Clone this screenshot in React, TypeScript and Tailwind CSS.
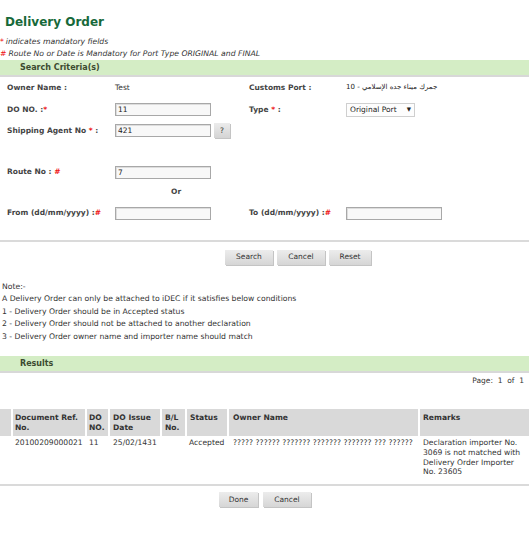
const FONT = "font-['DejaVu_Sans',Verdana,sans-serif]";

function Star({ c = "*" }: { c?: string }) {
  return <span className="text-[#e11]">{c}</span>;
}

function Field({ value = "", w = "w-[96px]" }: { value?: string; w?: string }) {
  return (
    <div
      className={`${w} h-[13px] border border-[#a8a8a8] bg-[#f8f8f8] px-[2px] text-[7.5px] leading-[11px] text-[#222] shadow-[inset_1px_1px_0_#ddd]`}
    >
      {value}
    </div>
  );
}

function Btn({ label, w }: { label: string; w: string }) {
  return (
    <div
      className={`${w} h-[15px] flex items-center justify-center bg-gradient-to-b from-[#ececec] to-[#d6d6d6] text-[7.5px] text-[#333] shadow-[1px_1px_0_#c4c4c4]`}
    >
      {label}
    </div>
  );
}

function Bar({ title }: { title: string }) {
  return (
    <div className="border-b-2 border-[#d8d8d8]">
      <div className="h-[15px] bg-[#d4edc5] pl-[20px] flex items-center text-[8px] font-bold text-[#3c4a30]">
        {title}
      </div>
    </div>
  );
}

const label = "text-[7.5px] font-bold text-[#444]";
const th = "bg-[#d9d9d9] h-[27px] pt-[4px] font-bold text-[#333]";
const td = "pt-[2px] text-[#333]";

export default function App() {
  return (
    <div className={`${FONT} w-[529px] h-[534px] bg-white text-[#333] overflow-hidden`}>
      {/* heading */}
      <div className="h-[36px] pt-[15px] pl-[5px] text-[12px] leading-[14px] font-bold text-[#17693a]">
        Delivery Order
      </div>
      <div className="h-[12px] flex items-center text-[7.7px] italic text-[#333]">
        <Star />
        <span className="ml-[2px]">indicates mandatory fields</span>
      </div>
      <div className="h-[12px] flex items-center text-[7.7px] italic text-[#333]">
        <Star c="#" />
        <span className="ml-[2px]">Route No or Date is Mandatory for Port Type ORIGINAL and FINAL</span>
      </div>
      <Bar title="Search Criteria(s)" />

      {/* search form */}
      <div className="pl-[7px] grid grid-cols-[108px_134px_97px_1fr] items-center">
        <div className={`${label} h-[21px] flex items-center`}>Owner Name :</div>
        <div className="text-[7.5px] text-[#333]">Test</div>
        <div className={label}>Customs Port :</div>
        <div className="text-[7px] text-[#222]">10 - جمرك ميناء جده الإسلامي</div>

        <div className={`${label} h-[23px] flex items-center`}>
          <span>
            DO NO. :<Star />
          </span>
        </div>
        <Field value="11" />
        <div className={label}>
          Type <Star /> :
        </div>
        <div className="w-[69px] h-[14px] border border-[#cfcfcf] bg-[#fdfdfd] flex items-center justify-between px-[3px] text-[7.5px] text-[#222]">
          <span>Original Port</span>
          <span className="text-[5.5px]">▼</span>
        </div>

        <div className={`${label} h-[19px] flex items-center`}>
          <span>
            Shipping Agent No <Star /> :
          </span>
        </div>
        <div className="flex items-center gap-[3px]">
          <Field value="421" />
          <div className="w-[16px] h-[15px] bg-gradient-to-b from-[#ececec] to-[#d4d4d4] flex items-center justify-center text-[7.5px] text-[#333] shadow-[1px_1px_0_#c4c4c4]">
            ?
          </div>
        </div>
        <div />
        <div />

        <div className="col-span-4 h-[22px]" />

        <div className={`${label} h-[20px] flex items-center`}>
          <span>
            Route No : <Star c="#" />
          </span>
        </div>
        <Field value="7" />
        <div />
        <div />

        <div className="h-[19px]" />
        <div className={`${label} pl-[56px]`}>Or</div>
        <div />
        <div />

        <div className={`${label} h-[24px] flex items-center`}>
          <span>
            From (dd/mm/yyyy) :<Star c="#" />
          </span>
        </div>
        <Field />
        <div className={label}>
          To (dd/mm/yyyy) :<Star c="#" />
        </div>
        <Field />
      </div>

      <div className="h-[15px]" />
      <div className="h-[2px] bg-[#dadada]" />

      <div className="h-[30px] flex items-center pl-[225px] gap-[4px]">
        <Btn label="Search" w="w-[48px]" />
        <Btn label="Cancel" w="w-[48px]" />
        <Btn label="Reset" w="w-[42px]" />
      </div>

      {/* notes */}
      <div className="pt-[9px] pl-[2px] text-[7.7px] leading-[12.4px] text-[#333]">
        <div>Note:-</div>
        <div>A Delivery Order can only be attached to iDEC if it satisfies below conditions</div>
        <div>1 - Delivery Order should be in Accepted status</div>
        <div>2 - Delivery Order should not be attached to another declaration</div>
        <div>3 - Delivery Order owner name and importer name should match</div>
      </div>

      <div className="h-[13px]" />
      <Bar title="Results" />

      <div className="h-[15px] flex items-center justify-end pr-[5px] text-[7.5px] text-[#333]">
        Page:&nbsp; 1 &nbsp;of&nbsp; 1
      </div>

      <div className="h-[21px]" />

      {/* results table */}
      <div className="grid grid-cols-[11px_72px_21px_50px_23px_40px_189px_1fr] gap-x-[2px] text-[7.6px] leading-[10px]">
        <div className="bg-[#d9d9d9] h-[27px]" />
        <div className={`${th} pl-[2px]`}>Document Ref. No.</div>
        <div className={`${th} pl-[2px]`}>DO NO.</div>
        <div className={`${th} pl-[3px]`}>DO Issue Date</div>
        <div className={`${th} pl-[3px]`}>B/L No.</div>
        <div className={`${th} pl-[3px]`}>Status</div>
        <div className={`${th} pl-[4px]`}>Owner Name</div>
        <div className={`${th} pl-[3px]`}>Remarks</div>

        <div />
        <div className={`${td} pl-[2px]`}>20100209000021</div>
        <div className={`${td} pl-[2px]`}>11</div>
        <div className={`${td} pl-[3px]`}>25/02/1431</div>
        <div />
        <div className={`${td} pl-[2px]`}>Accepted</div>
        <div className={`${td} pl-[4px] whitespace-nowrap`}>????? ?????? ??????? ??????? ??????? ??? ??????</div>
        <div className={`${td} pl-[3px] pr-[2px] pb-[7px] leading-[9.8px]`}>
          Declaration importer No. 3069 is not matched with Delivery Order Importer No. 23605
        </div>
      </div>

      <div className="h-[2px] bg-[#dadada]" />

      <div className="h-[26px] flex items-center pl-[219px] gap-[5px]">
        <Btn label="Done" w="w-[39px]" />
        <Btn label="Cancel" w="w-[48px]" />
      </div>
    </div>
  );
}
